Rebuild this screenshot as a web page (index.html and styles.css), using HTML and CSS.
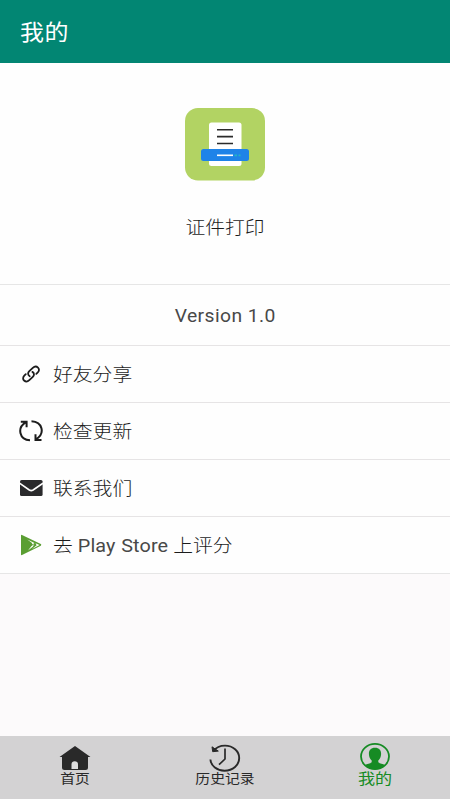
FILE: index.html
```html
<!DOCTYPE html>
<html lang="zh-CN">
<head>
<meta charset="utf-8">
<title>我的</title>
<link rel="stylesheet" href="styles.css">
</head>
<body>
<div class="app">
  <header class="bar"><h1 class="title">我的</h1></header>
  <main class="content">
    <section class="brand">
      <svg class="logo" width="80" height="73" viewBox="0 0 80 73">
        <rect width="80" height="72.500" rx="13" fill="#b2d363"/>
        <rect x="24" y="14.500" width="32.500" height="43.500" rx="2.500" fill="#fff"/>
        <path d="M32 21.700h16M32 28.600h16M32 35.500h16" stroke="#2b2b2b" stroke-width="1.600"/>
        <rect x="16" y="41" width="48" height="12" rx="2.500" fill="#1e83e8"/>
        <path d="M32 47.300h16" stroke="#fff" stroke-width="1.600"/>
        <path d="M49.500 47.300h2.500M53.500 47.300h2" stroke="#21b5c4" stroke-width="1.800"/>
      </svg>
      <div class="name">证件打印</div>
    </section>
    <section class="version"><span>Version 1.0</span></section>
    <ul class="list">
      <li class="row">
        <svg class="icon" width="24" height="24" viewBox="0 0 24 24" fill="none" stroke="#1c1c1c" stroke-width="1.800" stroke-linecap="round">
          <path d="M10.700 14.200C8.600 13 8.700 10.700 10.300 9.200L13.800 5.900C15.400 4.400 17.600 4.300 19 5.600C20.400 6.900 20.300 8.900 18.800 10.400L17.300 11.900"/>
          <path d="M13.400 9.900C15.500 11.100 15.400 13.400 13.800 14.900L10.300 18.200C8.700 19.700 6.500 19.800 5.100 18.500C3.700 17.200 3.800 15.200 5.300 13.700L6.800 12.200"/>
        </svg>
        <span class="label">好友分享</span>
      </li>
      <li class="row">
        <svg class="icon" width="24" height="24" viewBox="0 0 24 24" fill="none" stroke="#1c1c1c" stroke-width="2">
          <path d="M11 21.300C.5 20.800-2.500 9 7 3.200M1.800 2.700H7.600V8.300"/>
          <path d="M12.500 2.300C23.500 2.800 26.500 14.500 17 20.300M22.500 20.900H16.500V15.300"/>
        </svg>
        <span class="label">检查更新</span>
      </li>
      <li class="row">
        <svg class="icon" width="24" height="24" viewBox="0 0 24 24">
          <rect x="1" y="4" width="22.600" height="16" rx="1.600" fill="#2a2a2c"/>
          <path d="M.5 7.200L10.300 14Q12.200 15.200 14.100 14L24 7.200" fill="none" stroke="#fff" stroke-width="1.600"/>
        </svg>
        <span class="label">联系我们</span>
      </li>
      <li class="row">
        <svg class="icon" width="24" height="24" viewBox="0 0 24 24">
          <path d="M2 2.500Q2 1.400 3 1.900L21.800 11.100Q22.900 11.900 21.800 12.700L3 22.100Q2 22.500 2 21.500Z" fill="#5a9e32"/>
          <path d="M8.300 6.600L15.500 9.900L13.600 11.400L12.700 9.800ZM16.500 10.300L20.600 12L13 16L17.600 12.200ZM15.300 11L13.800 13.800L9 17.600L12.300 13.200Z" fill="#fff"/>
        </svg>
        <span class="label store">去 <span class="latin">Play Store</span> 上评分</span>
      </li>
    </ul>
  </main>
  <nav class="tabs">
    <a class="tab">
      <svg width="32" height="28" viewBox="0 0 32 28">
        <path d="M16 2L31.500 13H29V23.500Q29 26 26.500 26H5.500Q3 26 3 23.500V13H.5Z" fill="#292929"/>
        <path d="M12.500 25V20.500Q12.500 17.200 15.700 17.200Q19 17.200 19 20.500V25Z" fill="#ddd"/>
      </svg>
      <span>首页</span>
    </a>
    <a class="tab">
      <svg width="32" height="28" viewBox="0 0 32 28" fill="none" stroke="#292929" stroke-width="1.900">
        <path d="M1.400 15.500C2 22 8 26.700 15.500 26.700C24 26.700 30.200 21 30.200 14C30.200 7 24 1.600 16 1.600C11 1.600 7 3.500 4.500 6.800"/>
        <path d="M3 2.800L3.700 7.700L9.300 7.100Z" fill="#292929" stroke-width="1"/>
        <path d="M16 4.500V15L10 20.700" stroke-width="1.700"/>
      </svg>
      <span>历史记录</span>
    </a>
    <a class="tab active">
      <svg width="32" height="28" viewBox="0 0 32 28">
        <ellipse cx="16" cy="13.500" rx="14" ry="12.600" fill="none" stroke="#168b24" stroke-width="1.800"/>
        <path d="M16 4.800C11.800 4.800 9.800 7.500 9.900 11C10 13.800 11 16 12.700 17.400V19.300C11 20.800 8.200 20.800 5.700 22.200C11 27.500 21 27.500 26.300 22.200C23.800 20.800 21 20.800 19.300 19.300V17.400C21 16 22 13.800 22.100 11C22.200 7.500 20.200 4.800 16 4.800Z" fill="#168b24"/>
      </svg>
      <span>我的</span>
    </a>
  </nav>
</div>
</body>
</html>
```

FILE: styles.css
```css
* { box-sizing: border-box; }
body {
  margin: 0;
  background: #fff;
  font-family: "Noto Sans CJK SC", sans-serif;
  color: #4b4b4b;
}
.app {
  height: 800px;
  display: flex;
  flex-direction: column;
  padding-bottom: 1px;
}
.bar {
  height: 63px;
  flex: none;
  display: flex;
  align-items: center;
  padding: 0 0 3px 20px;
  background: #028673;
}
.title {
  margin: 0;
  font-size: 22px;
  line-height: 30px;
  font-weight: 400;
  color: #fff;
  letter-spacing: .5px;
  transform: scaleX(1.09);
  transform-origin: left;
}
.content {
  flex: 1;
  background: #fcfafb;
}
.brand {
  height: 221px;
  padding-top: 45px;
  display: flex;
  flex-direction: column;
  align-items: center;
  background: #fefefe;
}
.name {
  margin-top: 32px;
  font-size: 18px;
  font-weight: 300;
  line-height: 26px;
  color: #1c1c1c;
  transform: scaleX(1.1);
}
.version {
  height: 61px;
  display: flex;
  align-items: center;
  justify-content: center;
  border-top: 1px solid #e6e6e6;
  background: #fefefe;
  font-family: Roboto, sans-serif;
  font-size: 18px;
  letter-spacing: .4px;
  color: #484848;
}
.version span { transform: scaleX(1.07); }
.list {
  margin: 0;
  padding: 0;
  list-style: none;
  border-bottom: 1px solid #e6e6e6;
}
.row {
  height: 57px;
  display: flex;
  align-items: center;
  padding-left: 19px;
  border-top: 1px solid #e6e4e5;
  background: #fefefe;
}
.icon { flex: none; }
.label {
  margin: 0 0 2px 9.5px;
  font-size: 18px;
  font-weight: 300;
  line-height: 26px;
  white-space: nowrap;
  color: #1c1c1c;
  transform: scaleX(1.1);
  transform-origin: left;
}
.store {
  margin-bottom: 0;
  word-spacing: .6px;
}
.latin {
  font-family: Roboto, sans-serif;
  font-weight: 400;
  letter-spacing: .1px;
  color: #484848;
}
.tabs {
  height: 63px;
  flex: none;
  display: grid;
  grid-template-columns: repeat(3, 1fr);
  background: #d3d2d3;
}
.tab {
  display: flex;
  flex-direction: column;
  align-items: center;
  padding-top: 8px;
  font-size: 13px;
  line-height: 15px;
  color: #292929;
}
.tab svg { flex: none; }
.tab span {
  margin-top: -2px;
  transform: scaleX(1.14);
}
.active {
  padding-top: 7px;
  font-size: 15px;
  color: #168b24;
}
.active span { margin-top: -1px; }
```
